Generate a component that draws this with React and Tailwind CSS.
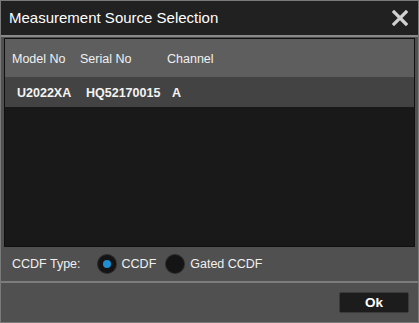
import React from "react";

const Radio = ({ checked, label }) => (
  <label className="flex items-center gap-[6px]">
    <span className="flex h-[18px] w-[18px] items-center justify-center rounded-full bg-[#141414] shadow-[0_0_0_1px_#2a2a2a]">
      {checked && <span className="h-[8px] w-[8px] rounded-full bg-[#1e8fd0]" />}
    </span>
    <span>{label}</span>
  </label>
);

export default function App() {
  return (
    <div className="h-[323px] w-[419px] bg-[#7a7a7a] p-[1px] font-['Liberation_Sans',sans-serif] text-[#e8e8e8]">
      <div className="flex h-full flex-col bg-[#505050]">
        {/* title */}
        <div className="flex h-[36px] items-center justify-between border-b-2 border-[#8a8a8a] bg-[#212121] pl-[8px] pr-[10px]">
          <span className="text-[15px] text-white">Measurement Source Selection</span>
          <svg width="16" height="16" viewBox="0 0 16 16">
            <path d="M2 2 L14 14 M14 2 L2 14" stroke="#d0d0d0" strokeWidth="3.2" strokeLinecap="square" />
          </svg>
        </div>

        {/* table */}
        <div className="mx-[3px] mt-[1px] flex h-[209px] flex-col border border-[#101010] bg-[#191919]">
          <div className="flex h-[38px] items-center bg-[#5e5e5e] pl-[7px] pt-[2px] text-[12.5px] text-[#f0f0f0]">
            <span className="w-[68px]">Model No</span>
            <span className="w-[87px]">Serial No</span>
            <span>Channel</span>
          </div>
          <div className="flex h-[30px] items-center bg-[#434343] pl-[12px] pt-[3px] text-[12.5px] font-bold text-[#f4f4f4]">
            <span className="w-[69px]">U2022XA</span>
            <span className="w-[86px]">HQ52170015</span>
            <span>A</span>
          </div>
        </div>

        {/* ccdf type */}
        <div className="flex h-[36px] items-center border-b-2 border-[#7c7c7c] pl-[11px] text-[12.5px] text-[#f0f0f0]">
          <span className="mr-[17px]">CCDF Type:</span>
          <div className="flex items-center gap-[10px]">
            <Radio checked label="CCDF" />
            <Radio label="Gated CCDF" />
          </div>
        </div>

        {/* footer */}
        <div className="flex flex-1 items-center justify-end pr-[9px]">
          <button className="h-[21px] w-[70px] rounded-[2px] border border-[#3a3a3a] bg-[#1c1c1c] text-[13.5px] font-bold text-white">
            Ok
          </button>
        </div>
      </div>
    </div>
  );
}
